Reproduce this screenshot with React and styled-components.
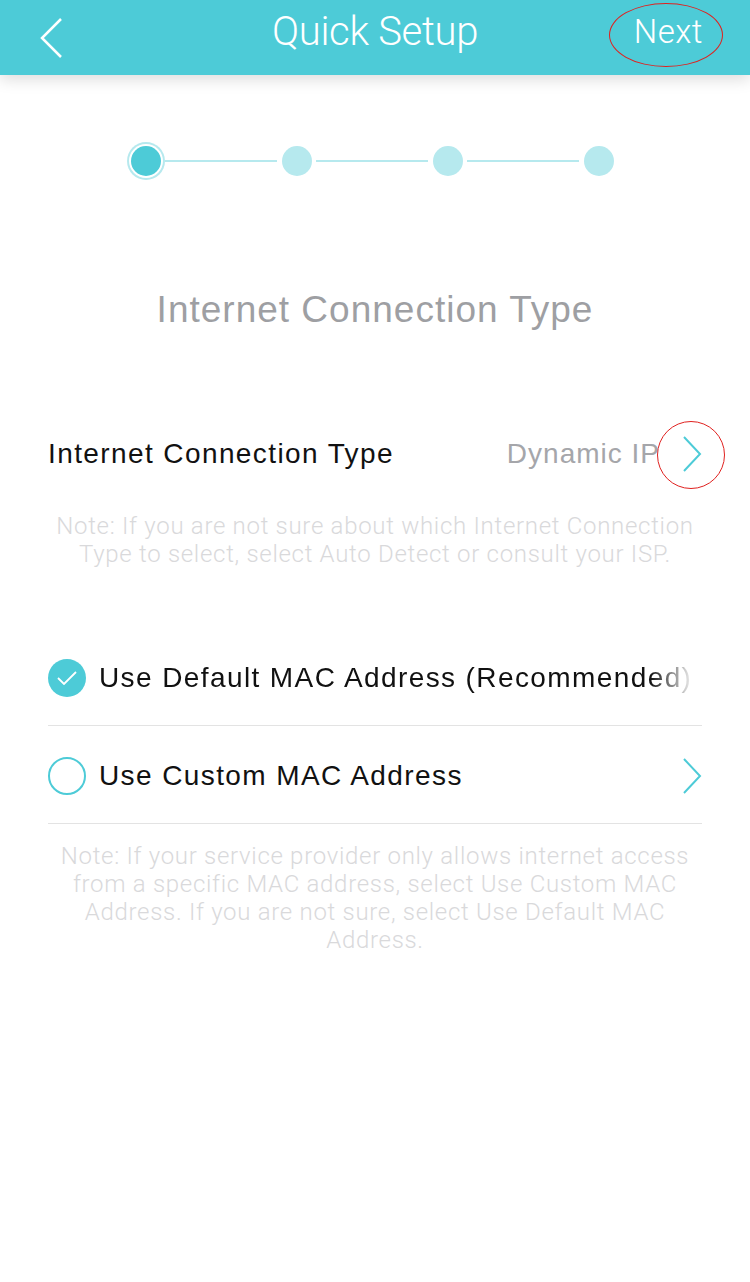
import styled, { createGlobalStyle } from 'styled-components'

const TEAL = '#4dcbd7'
const TEAL_LIGHT = '#b6e9ee'

const GlobalStyle = createGlobalStyle`
  html, body {
    margin: 0;
    padding: 0;
    background: #fff;
  }
  body {
    font-family: "Liberation Sans", Arial, sans-serif;
    width: 750px;
    height: 1282px;
    overflow: hidden;
  }
`

const Page = styled.div`
  width: 750px;
  min-height: 1282px;
  background: #fff;
`

const Header = styled.header`
  position: relative;
  height: 75px;
  background: ${TEAL};
  display: grid;
  grid-template-columns: 120px 1fr 120px;
  align-items: center;
  box-shadow: 0 5px 14px rgba(0, 0, 0, 0.13);
`

const BackButton = styled.div`
  padding-left: 38px;
  display: flex;
  align-items: center;
  height: 100%;
`

const HeaderTitle = styled.h1`
  margin: 0;
  text-align: center;
  color: #fff;
  font-family: Roboto, sans-serif;
  font-weight: 300;
  font-size: 40px;
  letter-spacing: -0.3px;
  line-height: 1;
  padding-bottom: 12px;
`

const NextButton = styled.div`
  position: relative;
  display: flex;
  justify-content: flex-end;
  align-items: center;
  padding-right: 47px;
  padding-bottom: 12px;
  color: #fff;
  font-family: Roboto, sans-serif;
  font-weight: 300;
  font-size: 33px;
  letter-spacing: 0.5px;
  height: 100%;
  box-sizing: border-box;
`

const Marker = styled.span`
  position: absolute;
  border: 1.5px solid #e0211f;
  border-radius: 50%;
  pointer-events: none;
`

const Stepper = styled.div`
  display: flex;
  align-items: center;
  padding: 67px 0 0 131px;
  height: 38px;
`

const Dot = styled.span`
  width: 30px;
  height: 30px;
  border-radius: 50%;
  background: ${(p) => (p.$active ? TEAL : TEAL_LIGHT)};
  flex: none;
  box-shadow: ${(p) => (p.$active ? `0 0 0 2px #fff, 0 0 0 4px ${TEAL_LIGHT}` : 'none')};
`

const Line = styled.span`
  width: 112px;
  height: 2px;
  background: ${TEAL_LIGHT};
  margin: 0 5px 0 4px;
  flex: none;
`

const SectionTitle = styled.h2`
  margin: 108px 0 0;
  text-align: center;
  font-weight: 400;
  font-size: 37px;
  letter-spacing: 1px;
  color: #9e9fa3;
  line-height: 44px;
`

const Content = styled.div`
  padding: 0 48px;
`

const TypeRow = styled.div`
  position: relative;
  display: flex;
  align-items: center;
  margin-top: 97px;
  height: 50px;
`

const RowLabel = styled.div`
  flex: 1;
  font-size: 28px;
  letter-spacing: 1.4px;
  color: #111;
  white-space: nowrap;
  overflow: hidden;
  ${(p) =>
    p.$fade &&
    `
    -webkit-mask-image: linear-gradient(to right, #000 calc(100% - 52px), rgba(0,0,0,0.05) calc(100% - 10px));
    mask-image: linear-gradient(to right, #000 calc(100% - 52px), rgba(0,0,0,0.05) calc(100% - 10px));
  `}
`

const RowValue = styled.span`
  font-size: 28px;
  letter-spacing: 1px;
  color: #a5a6aa;
  margin-right: 22px;
  white-space: nowrap;
`

const Chevron = ({ color = TEAL }) => (
  <svg width="20" height="36" viewBox="0 0 20 36" style={{ flex: 'none' }}>
    <polyline points="2,1 18,18 2,35" fill="none" stroke={color} strokeWidth="2" />
  </svg>
)

const Note = styled.p`
  margin: ${(p) => p.$top}px 0 0;
  text-align: center;
  font-family: Roboto, sans-serif;
  font-weight: 300;
  font-size: 24px;
  letter-spacing: 0.7px;
  line-height: 28.3px;
  color: #d9d9db;
`

const OptionList = styled.div`
  margin-top: 59px;
`

const OptionRow = styled.div`
  display: flex;
  align-items: center;
  height: 98px;
  padding-top: 3px;
  border-bottom: 1px solid #e3e3e3;
  gap: 13px;
  box-sizing: border-box;
`

const Radio = styled.span`
  width: 38px;
  height: 38px;
  border-radius: 50%;
  box-sizing: border-box;
  flex: none;
  display: flex;
  align-items: center;
  justify-content: center;
  background: ${(p) => (p.$checked ? TEAL : '#fff')};
  border: ${(p) => (p.$checked ? 'none' : `2px solid ${TEAL}`)};
`

export default function App() {
  return (
    <Page>
      <GlobalStyle />
      <Header>
        <BackButton>
          <svg width="26" height="42" viewBox="0 0 26 42">
            <polyline points="23,2 4,21 23,40" fill="none" stroke="#fff" strokeWidth="2.5" />
          </svg>
        </BackButton>
        <HeaderTitle>Quick Setup</HeaderTitle>
        <NextButton>
          Next
          <Marker style={{ right: 27, top: 3, width: 112, height: 62 }} />
        </NextButton>
      </Header>

      <Stepper>
        <Dot $active />
        <Line />
        <Dot />
        <Line />
        <Dot />
        <Line />
        <Dot />
      </Stepper>

      <SectionTitle>Internet Connection Type</SectionTitle>

      <Content>
        <TypeRow>
          <RowLabel>Internet Connection Type</RowLabel>
          <RowValue>Dynamic IP</RowValue>
          <Chevron />
          <Marker style={{ right: -23, top: -8, width: 66, height: 66 }} />
        </TypeRow>

        <Note $top={33}>
          Note: If you are not sure about which Internet Connection Type to select, select Auto
          Detect or consult your ISP.
        </Note>

        <OptionList>
          <OptionRow>
            <Radio $checked>
              <svg width="20" height="14" viewBox="0 0 20 14">
                <polyline points="1,7 7,13 19,1" fill="none" stroke="#fff" strokeWidth="1.8" />
              </svg>
            </Radio>
            <RowLabel $fade>Use Default MAC Address (Recommended)</RowLabel>
          </OptionRow>
          <OptionRow>
            <Radio />
            <RowLabel>Use Custom MAC Address</RowLabel>
            <Chevron />
          </OptionRow>
        </OptionList>

        <Note $top={18}>
          Note: If your service provider only allows internet access from a specific MAC address,
          select Use Custom MAC Address. If you are not sure, select Use Default MAC Address.
        </Note>
      </Content>
    </Page>
  )
}
